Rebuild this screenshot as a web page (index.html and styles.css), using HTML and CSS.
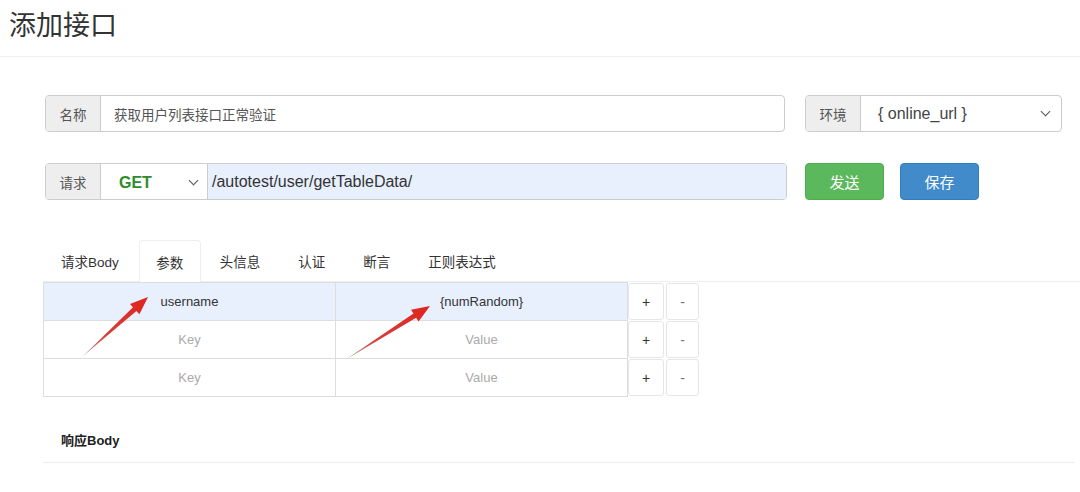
FILE: index.html
```html
<!DOCTYPE html>
<html lang="zh-CN">

<head>
    <meta charset="UTF-8">
    <title>添加接口</title>
    <link rel="stylesheet" href="styles.css">
</head>

<body>
    <div class="page-header">
        <h2>添加接口</h2>
    </div>

    <div class="content">
        <div class="form-row">
            <div class="input-group name-group">
                <span class="addon">名称</span>
                <div class="field">获取用户列表接口正常验证</div>
            </div>
            <div class="input-group env-group">
                <span class="addon">环境</span>
                <div class="field select-field">
                    <span>{ online_url }</span>
                    <span class="chevron"></span>
                </div>
            </div>
        </div>

        <div class="form-row second-row">
            <div class="input-group url-group">
                <span class="addon">请求</span>
                <div class="method">
                    <span>GET</span>
                    <span class="chevron"></span>
                </div>
                <div class="field url-field">/autotest/user/getTableData/</div>
            </div>
            <div class="btn btn-send">发送</div>
            <div class="btn btn-save">保存</div>
        </div>
    </div>

    <div class="tabs">
        <div class="tab">请求Body</div>
        <div class="tab active">参数</div>
        <div class="tab">头信息</div>
        <div class="tab">认证</div>
        <div class="tab">断言</div>
        <div class="tab">正则表达式</div>
    </div>

    <div class="params">
        <div class="param-row filled">
            <div class="cell">username</div>
            <div class="cell">{numRandom}</div>
            <div class="mini-btn plus">+</div>
            <div class="mini-btn minus">-</div>
        </div>
        <div class="param-row">
            <div class="cell placeholder">Key</div>
            <div class="cell placeholder">Value</div>
            <div class="mini-btn plus">+</div>
            <div class="mini-btn minus">-</div>
        </div>
        <div class="param-row">
            <div class="cell placeholder">Key</div>
            <div class="cell placeholder">Value</div>
            <div class="mini-btn plus">+</div>
            <div class="mini-btn minus">-</div>
        </div>
    </div>

    <div class="response">
        <div class="response-title">响应Body</div>
    </div>

    <!-- 注释用の赤い矢印 -->
    <svg class="arrows" width="1080" height="492" viewBox="0 0 1080 492">
        <defs>
            <linearGradient id="arrow1" x1="82" y1="357" x2="148" y2="297" gradientUnits="userSpaceOnUse">
                <stop offset="0" stop-color="#b9a7a4" />
                <stop offset="0.35" stop-color="#d6403a" />
                <stop offset="1" stop-color="#e0231c" />
            </linearGradient>
            <linearGradient id="arrow2" x1="345" y1="360" x2="430" y2="306" gradientUnits="userSpaceOnUse">
                <stop offset="0" stop-color="#b9a7a4" />
                <stop offset="0.35" stop-color="#d6403a" />
                <stop offset="1" stop-color="#e0231c" />
            </linearGradient>
        </defs>
        <polygon fill="url(#arrow1)" points="82,357 136.4,311 139.4,314.3 148,297 130,303.9 133,307.2" />
        <polygon fill="url(#arrow2)" points="345,360 416.1,317.7 418.6,321.5 430,306 411,309.7 413.5,313.5" />
    </svg>
</body>

</html>
```

FILE: styles.css
```css
body {
    margin: 0;
    background-color: #FFFFFF;
    font-family: "Liberation Sans", "Noto Sans CJK SC", sans-serif;
    color: #333333;
    position: relative;
    width: 1080px;
    height: 492px;
    overflow: hidden;
}

.page-header {
    height: 57px;
    border-bottom: 1px solid #EEEEEE;
    box-sizing: border-box;
}

.page-header h2 {
    margin: 0;
    padding: 10px 0 0 9px;
    font-size: 27px;
    font-weight: normal;
    line-height: 33px;
    color: #333333;
}

.content {
    padding: 38px 0 0 45px;
}

.form-row {
    display: flex;
    align-items: center;
}

.second-row {
    margin-top: 31px;
}

.input-group {
    display: flex;
    height: 37px;
    border: 1px solid #CCCCCC;
    border-radius: 4px;
    box-sizing: border-box;
    overflow: hidden;
    font-size: 13.5px;
}

.addon {
    width: 55px;
    flex: none;
    display: flex;
    align-items: center;
    justify-content: center;
    background-color: #EEEEEE;
    border-right: 1px solid #CCCCCC;
    color: #555555;
    box-sizing: border-box;
}

.field {
    flex: 1;
    display: flex;
    align-items: center;
    padding-left: 13px;
    color: #555555;
}

.name-group {
    width: 740px;
}

.env-group {
    width: 257px;
    margin-left: 20px;
}

.select-field {
    justify-content: space-between;
    padding-left: 17px;
    padding-right: 12px;
    font-size: 16px;
    color: #444444;
}

.chevron {
    width: 6px;
    height: 6px;
    border-right: 1.5px solid #555555;
    border-bottom: 1.5px solid #555555;
    transform: rotate(45deg);
    margin-top: -4px;
}

.url-group {
    width: 742px;
}

.method {
    width: 107px;
    flex: none;
    display: flex;
    align-items: center;
    justify-content: space-between;
    padding: 2px 10px 0 18px;
    box-sizing: border-box;
    border-right: 1px solid #CCCCCC;
    font-size: 16px;
    font-weight: bold;
    color: #2E8B2E;
}

.url-field {
    background-color: #E8F0FE;
    padding-left: 4px;
    font-size: 16px;
    color: #333333;
}

.btn {
    height: 37px;
    width: 79px;
    border-radius: 4px;
    display: flex;
    align-items: center;
    justify-content: center;
    font-size: 15px;
    color: #FFFFFF;
    box-sizing: border-box;
}

.btn-send {
    margin-left: 18px;
    background-color: #5CB85C;
    border: 1px solid #4CAE4C;
}

.btn-save {
    margin-left: 16px;
    background-color: #428BCA;
    border: 1px solid #357EBD;
}

.tabs {
    display: flex;
    margin: 40px 0 0 43px;
    height: 42px;
    border-bottom: 1px solid #EEEEEE;
    box-sizing: border-box;
}

.tab {
    padding: 0 18px;
    display: flex;
    align-items: center;
    font-size: 13.5px;
    color: #333333;
    border: 1px solid transparent;
    border-bottom: none;
    border-radius: 4px 4px 0 0;
}

.tab.active {
    border-color: #EEEEEE;
    background-color: #FFFFFF;
    margin-bottom: -1px;
    padding: 0 16.5px;
}

.tab:first-child {
    padding-left: 17px;
    padding-right: 19px;
}

.params {
    margin-left: 43px;
}

.param-row {
    display: flex;
    height: 39px;
    margin-top: -1px;
}

.param-row:first-child {
    margin-top: 0;
}

.cell {
    width: 293px;
    display: flex;
    align-items: center;
    justify-content: center;
    border: 1px solid #DDDDDD;
    box-sizing: border-box;
    margin-right: -1px;
    font-size: 13px;
    color: #333333;
}

.param-row.filled .cell {
    background-color: #E8F0FE;
}

.cell.placeholder {
    color: #AAAAAA;
}

.mini-btn {
    width: 36px;
    height: 37px;
    align-self: center;
    display: flex;
    align-items: center;
    justify-content: center;
    border: 1px solid #E6E6E6;
    border-radius: 3px;
    box-sizing: border-box;
    font-size: 14px;
    color: #333333;
    margin-left: 1px;
}

.mini-btn.minus {
    width: 33px;
    margin-left: 2px;
    color: #777777;
}

.response {
    margin: 34px 5px 0 43px;
    border-bottom: 1px solid #EEEEEE;
}

.response-title {
    padding: 0 0 11px 18px;
    font-size: 13px;
    font-weight: bold;
    color: #222222;
    line-height: 20px;
}

.arrows {
    position: absolute;
    left: 0;
    top: 0;
    pointer-events: none;
}
```
